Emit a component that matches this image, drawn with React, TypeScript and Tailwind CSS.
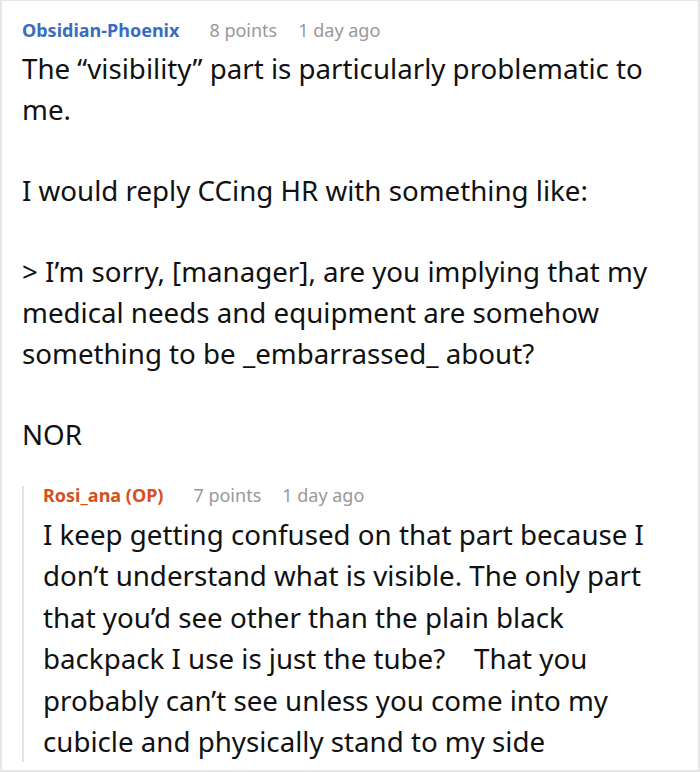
import React from 'react';

const FONT = { fontFamily: '"Noto Sans", "Open Sans", sans-serif' };

const Meta = ({ name, color, points, age }: { name: string; color: string; points: string; age: string }) => (
  <div className="flex items-baseline text-[18px] leading-none">
    <span className={`font-bold ${color} mr-[30px]`}>{name}</span>
    <span className="text-[#999999] mr-[21px]">{points}</span>
    <span className="text-[#999999]">{age}</span>
  </div>
);

export default function App() {
  return (
    <div style={FONT} className="w-[700px] h-[772px] overflow-hidden bg-white border-2 border-t border-[#e6e6e6] pl-[20px] pr-[14px] pt-[20px] text-[#111111]">
      <Meta name="Obsidian-Phoenix" color="text-[#3a6cc0]" points="8 points" age="1 day ago" />
      <div className="mt-[9px] text-[27.7px] leading-[40.7px] space-y-[40.7px]">
        <p>The “visibility” part is particularly problematic to me.</p>
        <p>I would reply CCing HR with something like:</p>
        <p>&gt; I’m sorry, [manager], are you implying that my medical needs and equipment are somehow something to be _embarrassed_ about?</p>
        <p>NOR</p>
      </div>
      <div className="mt-[31px] border-l-2 border-[#e3e3e3] pl-[19px]">
        <Meta name="Rosi_ana (OP)" color="text-[#d4501c]" points="7 points" age="1 day ago" />
        <p className="mt-[10px] text-[27.7px] leading-[41.4px]">
          I keep getting confused on that part because I don’t understand what is visible. The only part that you’d see other than the plain black backpack I use is just the tube?{'\u00a0\u00a0\u00a0 '}That you probably can’t see unless you come into my cubicle and physically stand to my side
        </p>
      </div>
    </div>
  );
}
